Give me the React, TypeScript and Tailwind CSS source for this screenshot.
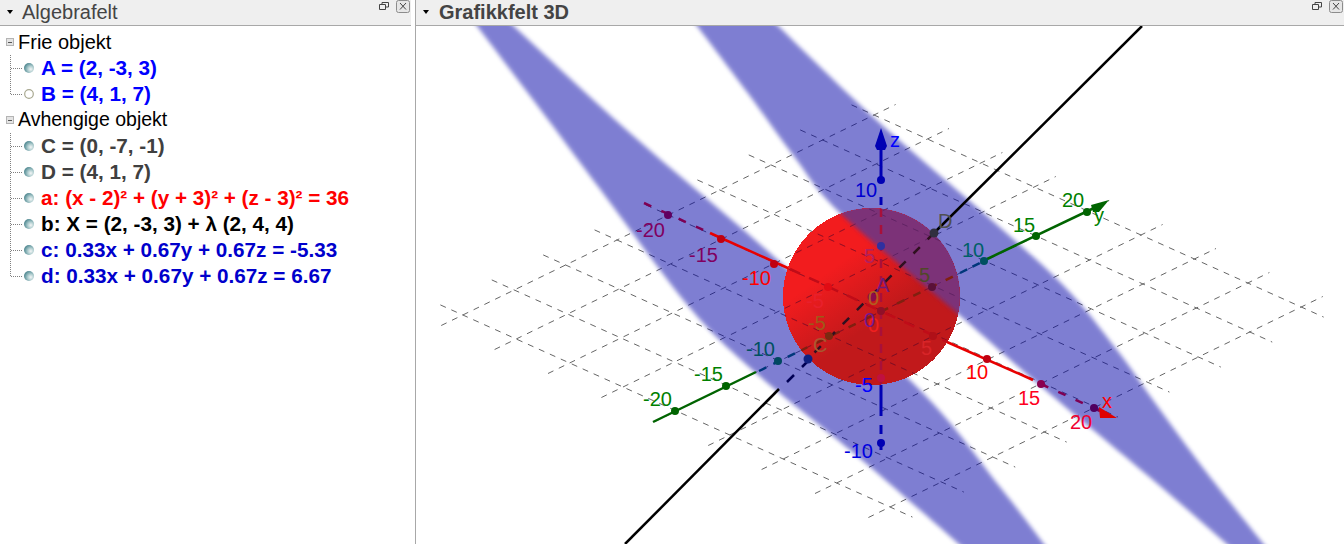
import React from "react";

const SANS = "font-['Liberation_Sans',Arial,sans-serif]";

function Ball({ hollow }: { hollow?: boolean }) {
  return (
    <svg width="12" height="12" viewBox="0 0 12 12" className="shrink-0">
      <defs>
        <radialGradient id="ballg" cx="0.68" cy="0.62" r="0.8">
          <stop offset="0" stopColor="#f4f6f6" />
          <stop offset="0.35" stopColor="#b4d0d2" />
          <stop offset="0.8" stopColor="#5a9098" />
          <stop offset="1" stopColor="#3c7880" />
        </radialGradient>
      </defs>
      {hollow ? (
        <circle cx="6" cy="6" r="4.3" fill="#fff" stroke="#a8a890" strokeWidth="1.2" />
      ) : (
        <circle cx="6" cy="6" r="5" fill="url(#ballg)" />
      )}
    </svg>
  );
}

function Connector({ last }: { last?: boolean }) {
  return (
    <svg width="13" height="26" viewBox="0 0 13 26" className="shrink-0">
      <path d={last ? "M0.5 0V14" : "M0.5 0V26"} fill="none" stroke="#808080" strokeWidth="1" strokeDasharray="1 1" />
      <path d="M1 13.5H13" fill="none" stroke="#808080" strokeWidth="1" strokeDasharray="1 1" />
    </svg>
  );
}

function GroupRow({ label, size }: { label: string; size: string }) {
  return (
    <div className="flex h-[26px] items-center">
      <div className="ml-[6px] mr-[4px] flex h-[8px] w-[8px] items-center justify-center border border-[#b4b4b4] bg-[#e4e4e4]">
        <div className="h-px w-[4px] bg-[#555]" />
      </div>
      <span className={`${size} text-black`}>{label}</span>
    </div>
  );
}

function Leaf({ text, color, last, hollow }: { text: string; color: string; last?: boolean; hollow?: boolean }) {
  return (
    <div className="flex h-[26px] items-center pl-[10px]">
      <Connector last={last} />
      <Ball hollow={hollow} />
      <span className={`ml-[6px] whitespace-nowrap text-[20.7px] font-bold ${color}`}>{text}</span>
    </div>
  );
}

function WindowButtons() {
  return (
    <div className="ml-auto flex items-start gap-[7px] pr-[1px]">
      <svg width="10" height="8" viewBox="0 0 10 8" className="mt-[2px]">
        <path d="M0.5 2.5H6.5V7.5H0.5ZM3 2V0.5H9.5V5H7" fill="none" stroke="#444" strokeWidth="1" />
      </svg>
      <svg width="14" height="13" viewBox="0 0 14 13">
        <rect x="0.5" y="0.5" width="13" height="12" rx="2" fill="#e6e6e6" stroke="#8c8c8c" />
        <path d="M4 3L10 9.5M10 3L4 9.5" stroke="#444" strokeWidth="1" />
      </svg>
    </div>
  );
}

function Header({ title, bold, gap }: { title: string; bold?: boolean; gap: string }) {
  return (
    <div className="flex h-[26px] shrink-0 items-start border-b border-[#a8a8a8] bg-[#efefef] pl-[7px]">
      <svg width="6" height="4" viewBox="0 0 6 4" className="mt-[10px]">
        <path d="M0 0H6L3 4Z" fill="#000" />
      </svg>
      <span className={`${gap} text-[20px] leading-[24px] text-[#444] ${bold ? "font-bold" : ""}`}>{title}</span>
      <WindowButtons />
    </div>
  );
}

/* ---------- 3D drawing ---------- */
const O = { x: 882, y: 311 };
const A = { x: 53.4, y: 24 };
const B = { x: 51.4, y: -25 };
const P = (a: number, b: number) => ({ x: O.x + a * A.x + b * B.x, y: O.y + a * A.y + b * B.y });
const range = [-4, -3, -2, -1, 0, 1, 2, 3, 4];
const EXT = 4.42;

function Grid({ stroke, opacity = 1 }: { stroke: string; opacity?: number }) {
  return (
    <g stroke={stroke} strokeWidth="1" strokeDasharray="6 6" opacity={opacity}>
      {range.map((k) => {
        const a1 = P(-EXT, k);
        const a2 = P(EXT, k);
        const b1 = P(k, -EXT);
        const b2 = P(k, EXT);
        return (
          <g key={k}>
            <line x1={a1.x} y1={a1.y} x2={a2.x} y2={a2.y} />
            <line x1={b1.x} y1={b1.y} x2={b2.x} y2={b2.y} />
          </g>
        );
      })}
    </g>
  );
}

type Pt = [number, number];
function smooth(pts: Pt[]): string {
  let d = `M${pts[0][0]} ${pts[0][1]}`;
  for (let i = 0; i < pts.length - 1; i++) {
    const p0 = pts[Math.max(i - 1, 0)];
    const p1 = pts[i];
    const p2 = pts[i + 1];
    const p3 = pts[Math.min(i + 2, pts.length - 1)];
    const c1x = p1[0] + (p2[0] - p0[0]) / 6;
    const c1y = p1[1] + (p2[1] - p0[1]) / 6;
    const c2x = p2[0] - (p3[0] - p1[0]) / 6;
    const c2y = p2[1] - (p3[1] - p1[1]) / 6;
    d += `C${c1x} ${c1y} ${c2x} ${c2y} ${p2[0]} ${p2[1]}`;
  }
  return d;
}
function bandPath(upper: Pt[], lower: Pt[]) {
  const back = smooth([...lower].reverse()).replace(/^M/, "L");
  return `${smooth(upper)}${back}Z`;
}

const BAND_LEFT = bandPath(
  [[505, 18], [630, 133], [763, 247], [920, 390], [1000, 487], [1050, 552]],
  [[471, 18], [540, 109], [600, 189], [690, 308], [756, 373], [850, 450], [920, 510], [968, 552]],
);
const BAND_RIGHT = bandPath(
  [[770, 18], [873, 117], [980, 210], [1063, 285], [1117, 350], [1153, 400], [1207, 473], [1270, 552]],
  [[691, 18], [747, 92], [793, 155], [840, 213], [957, 313], [1037, 383], [1153, 480], [1236, 552]],
);

type Lbl = [string, number, number, string];
const LABELS: Lbl[] = [
  ["-20", 636, 237, "#800060"],
  ["-15", 689, 262, "#800060"],
  ["-10", 742, 285, "#ff0000"],
  ["-5", 806, 308, "#e8202c"],
  ["5", 921, 355, "#d82428"],
  ["10", 966, 379, "#ff0000"],
  ["15", 1018, 405, "#ff0020"],
  ["20", 1070, 429, "#f00030"],
  ["-20", 643, 406, "#008000"],
  ["-15", 694, 381, "#008000"],
  ["-10", 746, 356, "#005060"],
  ["-5", 808, 330, "#a05818"],
  ["5", 919, 282, "#504828"],
  ["10", 962, 257, "#006068"],
  ["15", 1013, 232, "#008000"],
  ["20", 1062, 207, "#008000"],
  ["10", 855, 197, "#0000d0"],
  ["5", 864, 263, "#b02060"],
  ["0", 868, 305, "#b06020"],
  ["0", 868, 332, "#f02020"],
  ["0", 864, 327, "#701890"],
  ["-5", 855, 392, "#0000ff"],
  ["-10", 844, 458, "#0000e0"],
  ["z", 890, 147, "#0000ff"],
  ["x", 1102, 408, "#ff0000"],
  ["y", 1094, 222, "#008000"],
  ["A", 876, 292, "#701878"],
  ["D", 938, 228, "#505050"],
  ["C", 813, 352, "#a85830"],
];

type Dot = [number, number, string];
const DOTS: Dot[] = [
  [668, 215, "#600060"],
  [721, 239, "#c00010"],
  [774, 264, "#c00010"],
  [828, 287, "#e00c14"],
  [933, 336, "#b01018"],
  [987, 359, "#c00010"],
  [1041, 384, "#8a0050"],
  [1094, 408, "#500060"],
  [675, 411, "#006400"],
  [726, 386, "#006400"],
  [778, 361, "#004860"],
  [829, 336, "#7a2a10"],
  [932, 287, "#5a1038"],
  [984, 261, "#005060"],
  [1036, 236, "#006400"],
  [1087, 212, "#006400"],
  [881, 180, "#0000b4"],
  [881, 246, "#3030a0"],
  [881, 311, "#901028"],
  [881, 378, "#c01040"],
  [881, 443, "#0000b4"],
];

function Scene() {
  return (
    <svg viewBox="416 26 928 518" width="928" height="518" className="block">
      <defs>
        <filter id="soft" filterUnits="userSpaceOnUse" x="400" y="0" width="960" height="580">
          <feGaussianBlur stdDeviation="2.2" />
        </filter>
        <clipPath id="ball">
          <circle cx="871.5" cy="296.5" r="88.5" />
        </clipPath>
        <linearGradient id="sph" gradientUnits="userSpaceOnUse" x1="830" y1="270" x2="870" y2="325">
          <stop offset="0" stopColor="#f21c1e" />
          <stop offset="1" stopColor="#c1191b" />
        </linearGradient>
      </defs>

      <Grid stroke="#666666" />

      {/* parts of the axes that lie under the planes */}
      <g strokeWidth="2.5">
        <line x1="644" y1="203" x2="710" y2="233" stroke="#ff0000" strokeDasharray="8 11" />
        <line x1="1041" y1="384" x2="1100" y2="411" stroke="#ff0000" strokeDasharray="8 11" />
        <line x1="759" y1="371" x2="800" y2="351" stroke="#007050" strokeDasharray="8 8" />
        <line x1="960" y1="273" x2="984" y2="261" stroke="#007050" strokeDasharray="8 6" />
        <line x1="787" y1="382" x2="794" y2="375" stroke="#000" />
        <line x1="802" y1="367" x2="812" y2="357" stroke="#000" />
      </g>

      <path d={BAND_LEFT} fill="#0000a6" opacity="0.5" filter="url(#soft)" />
      <path d={BAND_RIGHT} fill="#0000a6" opacity="0.5" filter="url(#soft)" />

      {/* solid axes and line */}
      <g fill="none">
        <line x1="710" y1="233" x2="790" y2="269" stroke="#e80000" strokeWidth="2.5" />
        <line x1="947" y1="342" x2="1033" y2="380" stroke="#e80000" strokeWidth="2.5" />
        <line x1="653" y1="422" x2="756" y2="372" stroke="#006400" strokeWidth="2.5" />
        <line x1="985" y1="260" x2="1094" y2="208" stroke="#006400" strokeWidth="2.5" />
        <line x1="881" y1="146" x2="881" y2="181" stroke="#0000b4" strokeWidth="3" />
        <line x1="881" y1="385" x2="881" y2="416" stroke="#0000b4" strokeWidth="3" />
        <line x1="881" y1="197" x2="881" y2="210" stroke="#0000b4" strokeWidth="3" strokeDasharray="8 7" />
        <line x1="881" y1="425" x2="881" y2="450" stroke="#0000b4" strokeWidth="3" strokeDasharray="9 8" />
        <line x1="1142" y1="26" x2="934" y2="233" stroke="#000" strokeWidth="2.5" />
        <line x1="779" y1="389" x2="625" y2="544" stroke="#000" strokeWidth="2.5" />
      </g>
      <polygon points="1091,205 1109,200 1099,212 1093,212" fill="#006400" />
      <polygon points="1099,407 1117,418 1100,418" fill="#e00000" />
      <polygon points="881,128 887,146 885,150 877,150 875,146" fill="#0000b4" />

      {/* sphere */}
      <circle cx="871.5" cy="296.5" r="88.5" fill="url(#sph)" shapeRendering="crispEdges" />
      <g clipPath="url(#ball)">
        <Grid stroke="#7a0a10" opacity={0.35} />
        <path d={BAND_RIGHT} fill="#7c3078" filter="url(#soft)" />
        <Grid stroke="#300840" opacity={0.35} />
        <g strokeWidth="2.5" fill="none">
          <line x1="790" y1="269" x2="952" y2="344" stroke="#c00c18" strokeDasharray="11 10" />
          <line x1="800" y1="351" x2="960" y2="273" stroke="#802010" strokeDasharray="8 10" />
          <line x1="881" y1="208" x2="881" y2="385" stroke="#a8103a" strokeDasharray="9 8" />
          <line x1="934" y1="233" x2="808" y2="359" stroke="#301020" strokeDasharray="9 11" />
        </g>
      </g>

      {DOTS.map(([x, y, c], i) => (
        <circle key={i} cx={x} cy={y} r="4" fill={c} />
      ))}
      <circle cx="872" cy="297" r="4.5" fill="#8a0c4a" />
      <circle cx="934" cy="233" r="4.5" fill="#303040" />
      <circle cx="808" cy="359" r="4.5" fill="#102080" />

      <g className="text-[20px]" fontFamily="'Liberation Sans', Arial, sans-serif">
        {LABELS.map(([t, x, y, c], i) => (
          <text key={i} x={x} y={y} fill={c}>
            {t}
          </text>
        ))}
      </g>
    </svg>
  );
}

export default function App() {
  return (
    <div className={`flex h-[544px] w-[1344px] overflow-hidden bg-white ${SANS}`}>
      <div className="flex w-[411px] shrink-0 flex-col">
        <Header title="Algebrafelt" gap="ml-[9px]" />
        <div className="pt-[3px]">
          <GroupRow label="Frie objekt" size="text-[20px]" />
          <Leaf text="A = (2, -3, 3)" color="text-[#0000ff]" />
          <Leaf text="B = (4, 1, 7)" color="text-[#0000ff]" last hollow />
          <GroupRow label="Avhengige objekt" size="text-[19.5px]" />
          <Leaf text="C = (0, -7, -1)" color="text-[#404040]" />
          <Leaf text="D = (4, 1, 7)" color="text-[#404040]" />
          <Leaf text="a: (x - 2)² + (y + 3)² + (z - 3)² = 36" color="text-[#ff0000]" />
          <Leaf text="b: X = (2, -3, 3) + λ (2, 4, 4)" color="text-black" />
          <Leaf text="c: 0.33x + 0.67y + 0.67z = -5.33" color="text-[#0000cc]" />
          <Leaf text="d: 0.33x + 0.67y + 0.67z = 6.67" color="text-[#0000cc]" last />
        </div>
      </div>
      <div className="w-[4px] shrink-0 bg-white" />
      <div className="w-px shrink-0 bg-[#a8a8a8]" />
      <div className="flex w-[928px] shrink-0 flex-col">
        <Header title="Grafikkfelt 3D" bold gap="ml-[10px]" />
        <Scene />
      </div>
    </div>
  );
}
